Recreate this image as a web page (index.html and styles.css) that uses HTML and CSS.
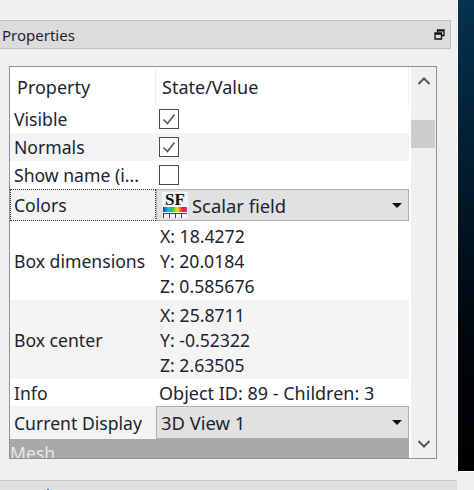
FILE: index.html
```html
<!DOCTYPE html>
<html lang="en">
<head>
    <meta charset="UTF-8" />
    <title>Properties</title>
    <link rel="stylesheet" href="styles.css">
</head>
<body>
    <div class="side">
        <div class="dock-title">
            <span>Properties</span>
            <svg class="float-icon" width="11" height="11" viewBox="0 0 11 11">
                <path d="M3.500 3V1H10V6.500H7.500M3.500 1.800H10" fill="none" stroke="#111" stroke-width="1.300" />
                <path d="M1 4H7.500V10H1Z M1 5H7.500" fill="none" stroke="#111" stroke-width="1.300" />
            </svg>
        </div>

        <div class="frame">
            <div class="table">
                <div class="row head">
                    <div class="cell key">Property</div>
                    <div class="cell val">State/Value</div>
                </div>
                <div class="row check-row">
                    <div class="cell name">Visible</div>
                    <div class="cell val-plain"><span class="check"><svg width="18" height="18" viewBox="0 0 18 18"><path d="M3.500 9.500L7.500 13.500L14.500 4.500" fill="none" stroke="#555" stroke-width="1.500" /></svg></span></div>
                </div>
                <div class="row check-row alt">
                    <div class="cell name">Normals</div>
                    <div class="cell val-plain"><span class="check"><svg width="18" height="18" viewBox="0 0 18 18"><path d="M3.500 9.500L7.500 13.500L14.500 4.500" fill="none" stroke="#555" stroke-width="1.500" /></svg></span></div>
                </div>
                <div class="row check-row">
                    <div class="cell name">Show name (i...</div>
                    <div class="cell val-plain"><span class="check"></span></div>
                </div>
                <div class="row combo-row colors">
                    <div class="cell name focus">Colors</div>
                    <div class="combo">
                        <span class="sf-icon">
                            <span class="sf-text">SF</span>
                            <span class="sf-bar"></span>
                            <span class="sf-ticks"></span>
                        </span>
                        <span class="combo-text">Scalar field</span>
                        <span class="arrow"></span>
                    </div>
                </div>
                <div class="row xyz">
                    <div class="cell name">Box dimensions</div>
                    <div class="coords">
                        <div>X: 18.4272</div>
                        <div>Y: 20.0184</div>
                        <div>Z: 0.585676</div>
                    </div>
                </div>
                <div class="row xyz alt">
                    <div class="cell name">Box center</div>
                    <div class="coords">
                        <div>X: 25.8711</div>
                        <div>Y: -0.52322</div>
                        <div>Z: 2.63505</div>
                    </div>
                </div>
                <div class="row info">
                    <div class="cell name">Info</div>
                    <div class="cell val-plain info-text">Object ID: 89 - Children: 3</div>
                </div>
                <div class="row combo-row display alt">
                    <div class="cell name">Current Display</div>
                    <div class="combo">
                        <span class="combo-text">3D View 1</span>
                        <span class="arrow"></span>
                    </div>
                </div>
                <div class="section">Mesh</div>
            </div>
            <div class="scrollbar">
                <svg class="chev" width="14" height="10" viewBox="0 0 14 10"><path d="M1.500 8L7 2.500L12.500 8" fill="none" stroke="#555" stroke-width="2" /></svg>
                <div class="track"><div class="thumb"></div></div>
                <svg class="chev" width="14" height="10" viewBox="0 0 14 10"><path d="M1.500 2L7 7.500L12.500 2" fill="none" stroke="#555" stroke-width="2" /></svg>
            </div>
        </div>

        <div class="dock-bottom">Console</div>
    </div>
    <div class="view"></div>
</body>
</html>
```

FILE: styles.css
```css
html, body {
    margin: 0;
    height: 490px;
    overflow: hidden;
}

body {
    display: flex;
    align-items: flex-start;
    background-color: #f0f0f0;
    font-family: 'Noto Sans', 'Open Sans', sans-serif;
    font-size: 17.6px;
    color: #1c2430;
}

.side {
    width: 457px;
    height: 490px;
    position: relative;
    padding-top: 20px;
    box-sizing: border-box;
}

.dock-title {
    width: 451px;
    height: 29px;
    box-sizing: border-box;
    background-color: #dcdcdc;
    border: 1px solid #c0c0c0;
    border-left: none;
    display: flex;
    align-items: center;
    justify-content: space-between;
    padding: 0 5px 0 2px;
    font-size: 15px;
}

.float-icon {
    margin-bottom: 1px;
}

.frame {
    width: 428px;
    height: 393px;
    margin: 17px 0 0 9px;
    box-sizing: border-box;
    border: 1px solid #8c9298;
    display: flex;
    background-color: #fff;
}

.table {
    width: 399px;
    height: 391px;
    overflow: hidden;
    flex-shrink: 0;
    margin-right: 2px;
}

.row {
    display: grid;
    grid-template-columns: 146px 1fr;
    align-items: center;
    white-space: nowrap;
}

.head {
    height: 38px;
    border-right: 1px solid #eeeeee;
    box-sizing: border-box;
    font-size: 18px;
}

.head .key {
    padding-left: 7px;
    height: 38px;
    line-height: 38px;
    box-sizing: border-box;
    border-right: 1px solid #eeeeee;
}

.head .val {
    padding-left: 6px;
    line-height: 40px;
}

.check-row {
    height: 28px;
}

.alt {
    background-color: #f4f4f4;
}

.name {
    padding-left: 4px;
}

.val-plain {
    padding-left: 3px;
}

.info-text {
    font-size: 18px;
}

.check {
    display: block;
    width: 18px;
    height: 18px;
    border: 1px solid #4a4a4a;
    background-color: #fff;
}

.check svg {
    display: block;
}

.combo-row.colors {
    height: 32px;
}

.combo-row.display {
    height: 33px;
}

.focus {
    height: 32px;
    line-height: 30px;
    box-sizing: border-box;
    border: 1px dotted #333;
    background-color: #f4f4f4;
    padding-left: 3px;
}

.combo {
    height: 100%;
    box-sizing: border-box;
    background-color: #e1e1e1;
    border: 1px solid #adadad;
    display: flex;
    align-items: center;
    padding-left: 4px;
    padding-right: 6px;
    font-size: 18.400px;
}

.combo-text {
    flex: 1;
}

.arrow {
    width: 0;
    height: 0;
    border-left: 5px solid transparent;
    border-right: 5px solid transparent;
    border-top: 5px solid #111;
}

.sf-icon {
    width: 26px;
    height: 26px;
    background-color: #f4f4f4;
    margin-left: 1px;
    margin-right: 4px;
    display: flex;
    flex-direction: column;
    align-items: center;
}

.sf-text {
    font-family: 'Liberation Serif', serif;
    font-weight: bold;
    font-size: 17px;
    line-height: 15px;
    color: #111;
}

.sf-bar {
    width: 24px;
    height: 5px;
    background: linear-gradient(to right, #2030e0, #10c0e0, #20d040, #f0e020, #f02020, #e020a0);
}

.sf-ticks {
    width: 24px;
    height: 5px;
    margin-top: 1px;
    border-top: 1px solid #444;
    box-sizing: border-box;
    background: repeating-linear-gradient(to right, #444 0 1px, transparent 1px 6px);
}

.xyz {
    height: 79px;
}

.coords {
    padding-left: 4px;
    padding-top: 2px;
    line-height: 25px;
}

.info {
    height: 27px;
}

.section {
    height: 19px;
    background-color: #a9a9a9;
    color: #e8e8e8;
    line-height: 28px;
    overflow: hidden;
}

.scrollbar {
    width: 25px;
    height: 391px;
    background-color: #f0f0f0;
    display: flex;
    flex-direction: column;
    align-items: center;
}

.chev {
    display: block;
    margin: 9px 0;
}

.track {
    flex: 1;
    width: 100%;
}

.thumb {
    width: 24px;
    height: 28px;
    margin-top: 25px;
    background-color: #cdcdcd;
}

.dock-bottom {
    position: absolute;
    left: 0;
    right: 0;
    top: 480px;
    height: 10px;
    overflow: hidden;
    background-color: #e0e0e0;
    border-top: 1px solid #c8c8c8;
    box-sizing: border-box;
    padding: 3px 0 0 2px;
    font-size: 15px;
    line-height: 20px;
}

.view {
    width: 17px;
    height: 472px;
    box-sizing: border-box;
    border-left: 1px solid #fff;
    border-bottom: 1px solid #fff;
    background: linear-gradient(to bottom, #04324f, #00070d 70%, #000);
}
```
